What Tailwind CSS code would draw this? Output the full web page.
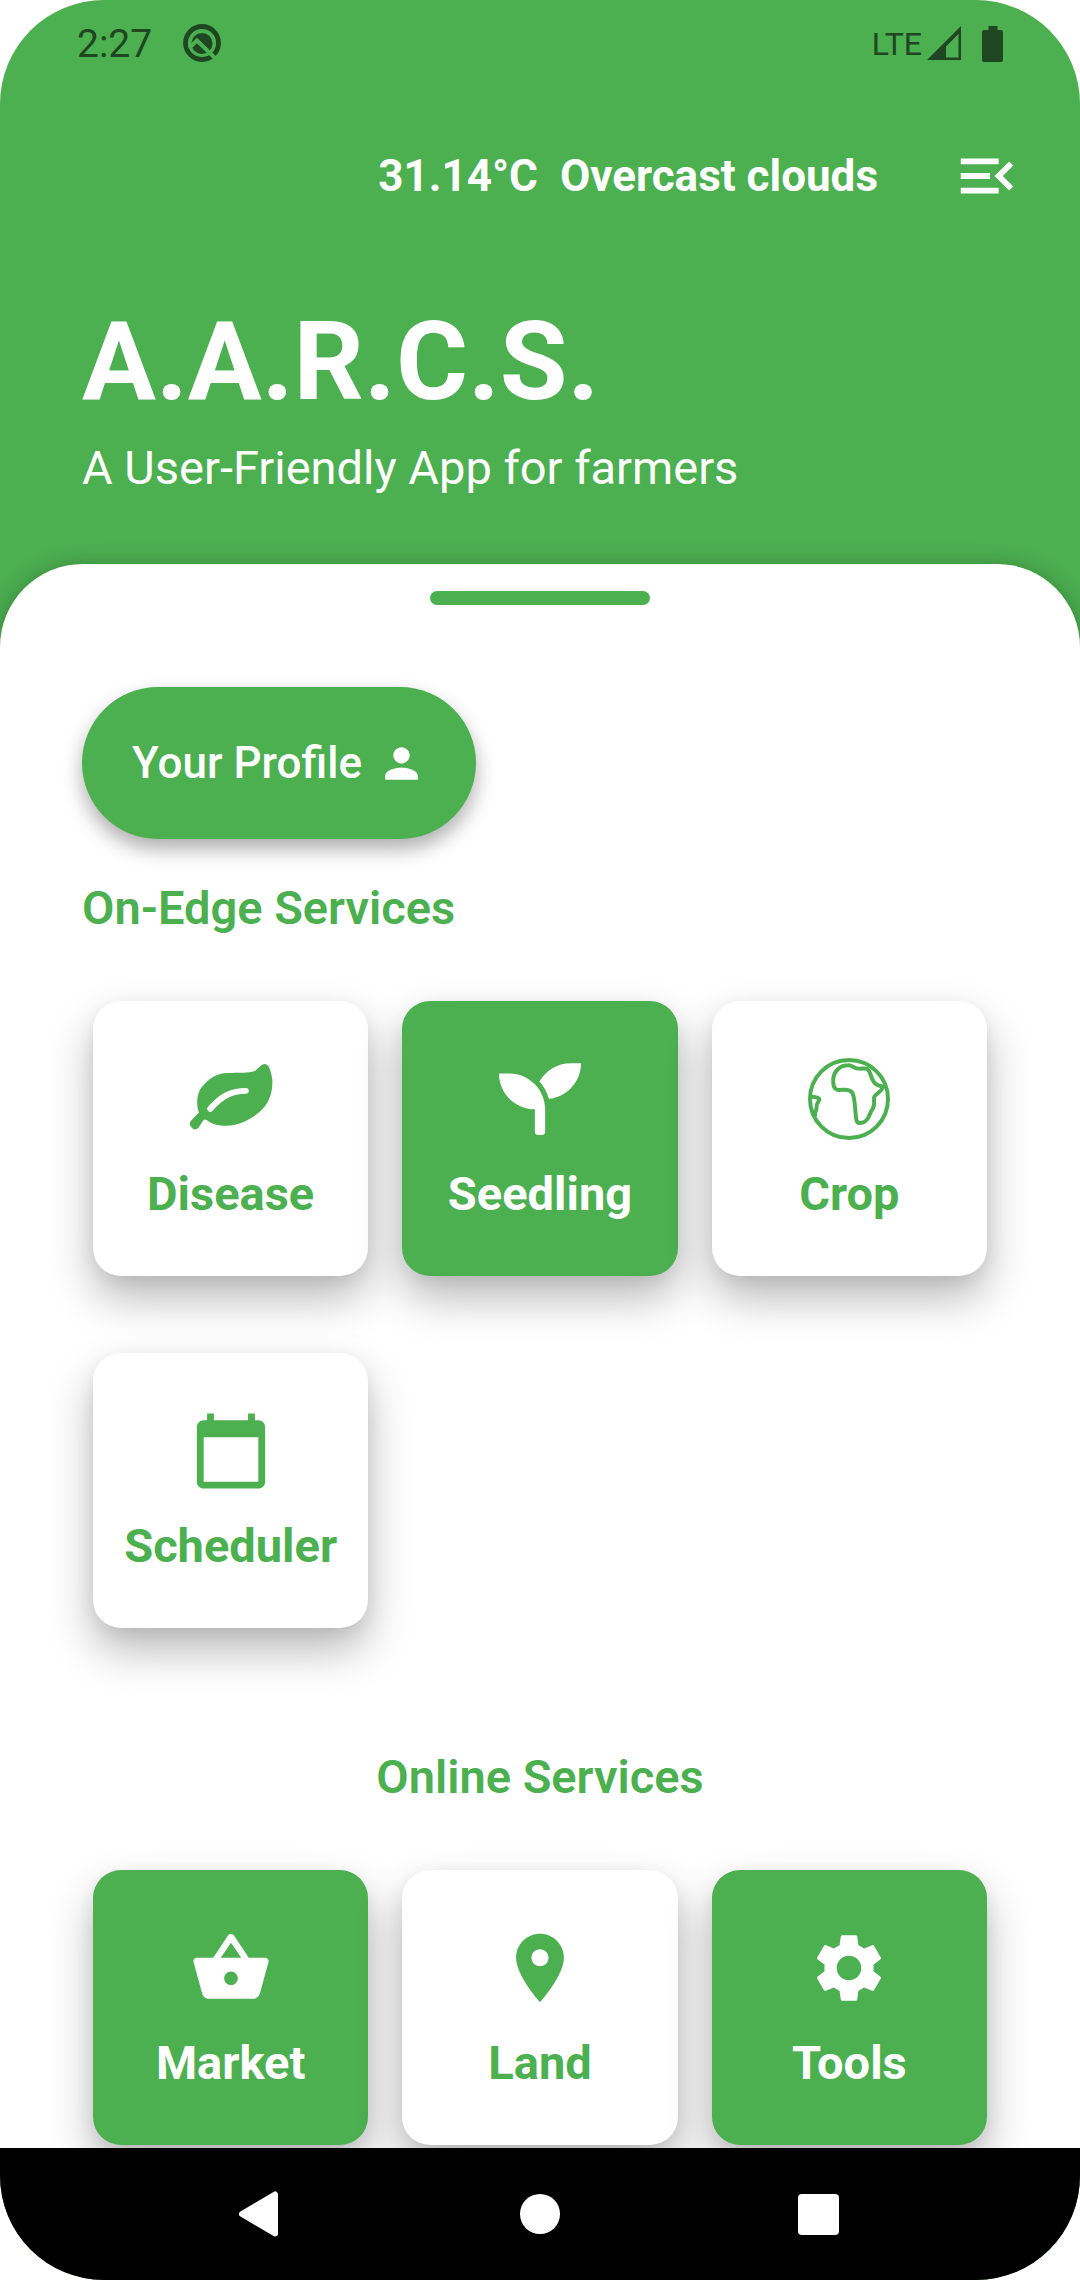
<!DOCTYPE html>
<html lang="en">
<head>
<meta charset="utf-8">
<meta name="viewport" content="width=device-width, initial-scale=1">
<title>A.A.R.C.S.</title>
<script src="https://cdn.jsdelivr.net/npm/@tailwindcss/browser@4"></script>
</head>
<body class="bg-white font-['Roboto',sans-serif]">
<div class="flex min-h-screen flex-col overflow-hidden rounded-[104px] bg-[#4caf50]">

  <!-- Status bar -->
  <div class="flex h-[88px] items-center justify-between pl-[77px] pr-[76px] text-[#1e4620]">
    <div class="flex items-center gap-[30px]">
      <span class="text-[39px] leading-[46px]">2:27</span>
      <svg class="size-[40px]" viewBox="0 0 40 40" fill="none" aria-hidden="true">
        <circle cx="20" cy="19" r="16.500" stroke="currentColor" stroke-width="4.800"/>
        <circle cx="20" cy="19.500" r="10.500" fill="currentColor"/>
        <path d="M7 24L15 16.500L35 36" stroke="#4caf50" stroke-width="4"/>
      </svg>
    </div>
    <div class="flex items-center">
      <span class="text-[32px] leading-[40px]">LTE</span>
      <svg class="ml-[5px] h-[36px] w-[35px]" viewBox="0 0 35 36" aria-hidden="true">
        <path fill="currentColor" fill-rule="evenodd" d="M34 0V34H0ZM31.500 8L19 20.500V31.500H31.500Z"/>
      </svg>
      <svg class="ml-[20px] h-[36px] w-[22px]" viewBox="0 0 22 36" aria-hidden="true">
        <path fill="currentColor" d="M6.500 0h9v4H19a2 2 0 0 1 2 2v28a2 2 0 0 1-2 2H2a2 2 0 0 1-2-2V6a2 2 0 0 1 2-2h4.500z"/>
      </svg>
    </div>
  </div>

  <!-- App bar -->
  <header class="text-white">
    <div class="flex h-[176px] items-center justify-end gap-[74px] pr-[58px]">
      <p class="flex gap-[22px] text-[44px] leading-[52px] font-bold"><span>31.14°C</span><span>Overcast clouds</span></p>
      <button type="button" aria-label="Open menu">
        <svg class="block size-[70px]" viewBox="0 0 24 24" fill="currentColor" aria-hidden="true"><path d="M3 18h13v-2H3v2zM3 6v2h13V6H3zm0 7h10v-2H3v2zm18 2.590L17.420 12 21 8.410 19.590 7l-5 5 5 5L21 15.590z"/></svg>
      </button>
    </div>
    <div class="px-[82px] pt-[34px] pb-[68px]">
      <h1 class="text-[110px] leading-[128px] font-bold">A.A.R.C.S.</h1>
      <p class="mt-[14px] text-[47px] leading-[56px]">A User-Friendly App for farmers</p>
    </div>
  </header>

  <!-- Services sheet -->
  <main class="flex-1 rounded-t-[83px] bg-white pt-[27px] pb-[3px] text-[#4caf50] shadow-[0_4px_24px_rgba(0,0,0,0.3)]">
    <div class="mx-auto h-[14px] w-[220px] rounded-[7px] bg-[#4caf50]"></div>

    <div class="px-[82px] pt-[82px]">
      <button type="button" class="flex h-[152px] items-center gap-[15px] rounded-full bg-[#4caf50] px-[50px] text-[44px] leading-[52px] font-medium text-white shadow-[0_10px_20px_rgba(0,0,0,0.32)]">
        Your Profile
        <svg class="size-[49px]" viewBox="0 0 24 24" fill="currentColor" aria-hidden="true"><path d="M12 12c2.210 0 4-1.790 4-4s-1.790-4-4-4-4 1.790-4 4 1.790 4 4 4zm0 2c-2.670 0-8 1.340-8 4v2h16v-2c0-2.660-5.330-4-8-4z"/></svg>
      </button>
      <h2 class="mt-[41px] text-[47px] leading-[56px] font-semibold">On-Edge Services</h2>
    </div>

    <div class="mt-[65px] grid grid-cols-3 gap-x-[34px] gap-y-[77px] px-[93px] text-[47px] leading-[56px]">
      <button type="button" class="flex h-[275px] flex-col items-center gap-[26px] rounded-[28px] bg-white pt-[57px] font-bold shadow-[0_22px_44px_rgba(0,0,0,0.28),0_4px_16px_rgba(0,0,0,0.06)]">
        <svg class="size-[82px] shrink-0 overflow-visible" viewBox="330 231 247 247" aria-hidden="true">
          <path fill="currentColor" d="M357 395C348 375 350 335 366 318C385 292 415 277 440 276C480 275 505 277 525 270C537 262 545 249 555 249C570 249 574 275 578 295C580 340 565 372 540 393C510 418 475 435 440 435C415 435 395 430 382 419C376 416 373 415 371 418L356 440C350 448 340 448 335 440C328 432 328 425 333 420Z"/>
          <path fill="none" stroke="#fff" stroke-width="18" stroke-linecap="round" d="M391 384C425 345 455 330 498 330"/>
        </svg>
        Disease
      </button>
      <button type="button" class="flex h-[275px] flex-col items-center gap-[26px] rounded-[28px] bg-[#4caf50] pt-[57px] font-bold text-white shadow-[0_22px_44px_rgba(0,0,0,0.28),0_4px_16px_rgba(0,0,0,0.06)]">
        <svg class="size-[82px] shrink-0" viewBox="0 0 512 512" fill="currentColor" aria-hidden="true"><path d="M64 96H0c0 123.700 100.300 224 224 224v144c0 8.800 7.200 16 16 16h32c8.800 0 16-7.200 16-16V320C288 196.300 187.700 96 64 96zm384-64c-84.200 0-157.400 46.500-195.700 115.200 27.700 30.200 48.200 66.900 59 107.600C424 243.100 512 147.900 512 32h-64z"/></svg>
        Seedling
      </button>
      <button type="button" class="flex h-[275px] flex-col items-center gap-[26px] rounded-[28px] bg-white pt-[57px] font-bold shadow-[0_22px_44px_rgba(0,0,0,0.28),0_4px_16px_rgba(0,0,0,0.06)]">
        <svg class="size-[82px] shrink-0" viewBox="353 233 247 247" fill="none" stroke="currentColor" stroke-width="12" stroke-linejoin="round" aria-hidden="true">
          <circle cx="476.500" cy="356.500" r="117.500"/>
          <path d="M474 255C486 254 490 264 505 265C518 266 528 262 533 267C543 277 541 290 550 303C556 314 570 318 580 319C577 326 572 332 565 338C553 347 551 349 552 356C553 368 553 375 549 384C540 397 540 402 535 412C528 425 520 430 507 429C500 428 499 423 498 415C494 385 495 350 486 337C475 322 455 331 441 329C430 326 428 312 429 295C432 272 450 255 474 255Z"/>
          <path d="M364 350C378 351 388 353 387 359C385 365 378 370 379 380C379 390 379 390 375 396L374 408"/>
        </svg>
        Crop
      </button>
      <button type="button" class="flex h-[275px] flex-col items-center gap-[26px] rounded-[28px] bg-white pt-[57px] font-bold shadow-[0_22px_44px_rgba(0,0,0,0.28),0_4px_16px_rgba(0,0,0,0.06)]">
        <svg class="size-[82px] shrink-0" viewBox="0 0 24 24" fill="currentColor" aria-hidden="true"><path d="M20 3h-1V1h-2v2H7V1H5v2H4c-1.100 0-2 .9-2 2v16c0 1.100.9 2 2 2h16c1.100 0 2-.9 2-2V5c0-1.100-.9-2-2-2zm0 18H4V8h16v13z"/></svg>
        Scheduler
      </button>
    </div>

    <h2 class="mt-[121px] text-center text-[47px] leading-[56px] font-semibold">Online Services</h2>

    <div class="mt-[65px] grid grid-cols-3 gap-x-[34px] px-[93px] text-[47px] leading-[56px]">
      <button type="button" class="flex h-[275px] flex-col items-center gap-[26px] rounded-[28px] bg-[#4caf50] pt-[57px] font-bold text-white shadow-[0_22px_44px_rgba(0,0,0,0.28),0_4px_16px_rgba(0,0,0,0.06)]">
        <svg class="size-[82px] shrink-0" viewBox="0 0 24 24" fill="currentColor" aria-hidden="true"><path d="M17.210 9l-4.380-6.560c-.19-.28-.51-.42-.83-.42-.32 0-.64.14-.83.43L6.790 9H2c-.55 0-1 .45-1 1 0 .09.010.18.040.27l2.540 9.270c.23.840 1 1.460 1.920 1.460h13c.92 0 1.690-.62 1.930-1.460l2.540-9.270L23 10c0-.55-.45-1-1-1h-4.790zM9 9l3-4.400L15 9H9zm3 8c-1.100 0-2-.9-2-2s.9-2 2-2 2 .9 2 2-.9 2-2 2z"/></svg>
        Market
      </button>
      <button type="button" class="flex h-[275px] flex-col items-center gap-[26px] rounded-[28px] bg-white pt-[57px] font-bold shadow-[0_22px_44px_rgba(0,0,0,0.28),0_4px_16px_rgba(0,0,0,0.06)]">
        <svg class="size-[82px] shrink-0" viewBox="0 0 24 24" fill="currentColor" aria-hidden="true"><path d="M12 2C8.130 2 5 5.130 5 9c0 5.250 7 13 7 13s7-7.750 7-13c0-3.870-3.130-7-7-7zm0 9.500c-1.380 0-2.500-1.120-2.500-2.500s1.120-2.500 2.500-2.500 2.500 1.120 2.500 2.500-1.120 2.500-2.500 2.500z"/></svg>
        Land
      </button>
      <button type="button" class="flex h-[275px] flex-col items-center gap-[26px] rounded-[28px] bg-[#4caf50] pt-[57px] font-bold text-white shadow-[0_22px_44px_rgba(0,0,0,0.28),0_4px_16px_rgba(0,0,0,0.06)]">
        <svg class="size-[82px] shrink-0" viewBox="0 0 24 24" fill="currentColor" aria-hidden="true"><path d="M19.140 12.940c.04-.3.060-.61.060-.94 0-.32-.02-.64-.07-.94l2.030-1.580c.18-.14.230-.41.120-.61l-1.920-3.320c-.12-.22-.37-.29-.59-.22l-2.390.960c-.5-.38-1.030-.7-1.620-.94l-.36-2.540c-.04-.24-.24-.41-.48-.41h-3.840c-.24 0-.43.170-.47.410l-.36 2.540c-.59.240-1.130.570-1.620.940l-2.390-.96c-.22-.08-.47 0-.59.220L2.740 8.870c-.12.210-.08.470.120.610l2.030 1.580c-.05.3-.09.630-.09.940s.020.640.070.940l-2.030 1.580c-.18.140-.23.410-.12.610l1.920 3.320c.12.220.370.290.590.220l2.390-.96c.5.380 1.030.7 1.620.940l.36 2.540c.05.240.240.410.480.410h3.840c.24 0 .44-.17.470-.41l.36-2.540c.59-.24 1.130-.56 1.620-.94l2.390.960c.22.080.470 0 .59-.22l1.920-3.320c.12-.22.070-.47-.12-.61l-2.010-1.580zM12 15.600c-1.980 0-3.600-1.620-3.600-3.600s1.620-3.600 3.600-3.600 3.600 1.620 3.600 3.600-1.620 3.600-3.600 3.600z"/></svg>
        Tools
      </button>
    </div>
  </main>

  <!-- System navigation -->
  <nav class="relative grid h-[132px] grid-cols-3 items-center justify-items-center bg-black px-[123px] text-white" aria-label="System">
    <button type="button" aria-label="Back">
      <svg class="block size-[46px]" viewBox="0 0 46 46" fill="currentColor" stroke="currentColor" stroke-width="6" stroke-linejoin="round" aria-hidden="true"><path d="M3 23L36 3.500V42.500Z"/></svg>
    </button>
    <button type="button" aria-label="Home" class="size-[40px] rounded-full bg-white"></button>
    <button type="button" aria-label="Recent apps" class="size-[41px] rounded-[4px] bg-white"></button>
  </nav>
</div>
</body>
</html>
